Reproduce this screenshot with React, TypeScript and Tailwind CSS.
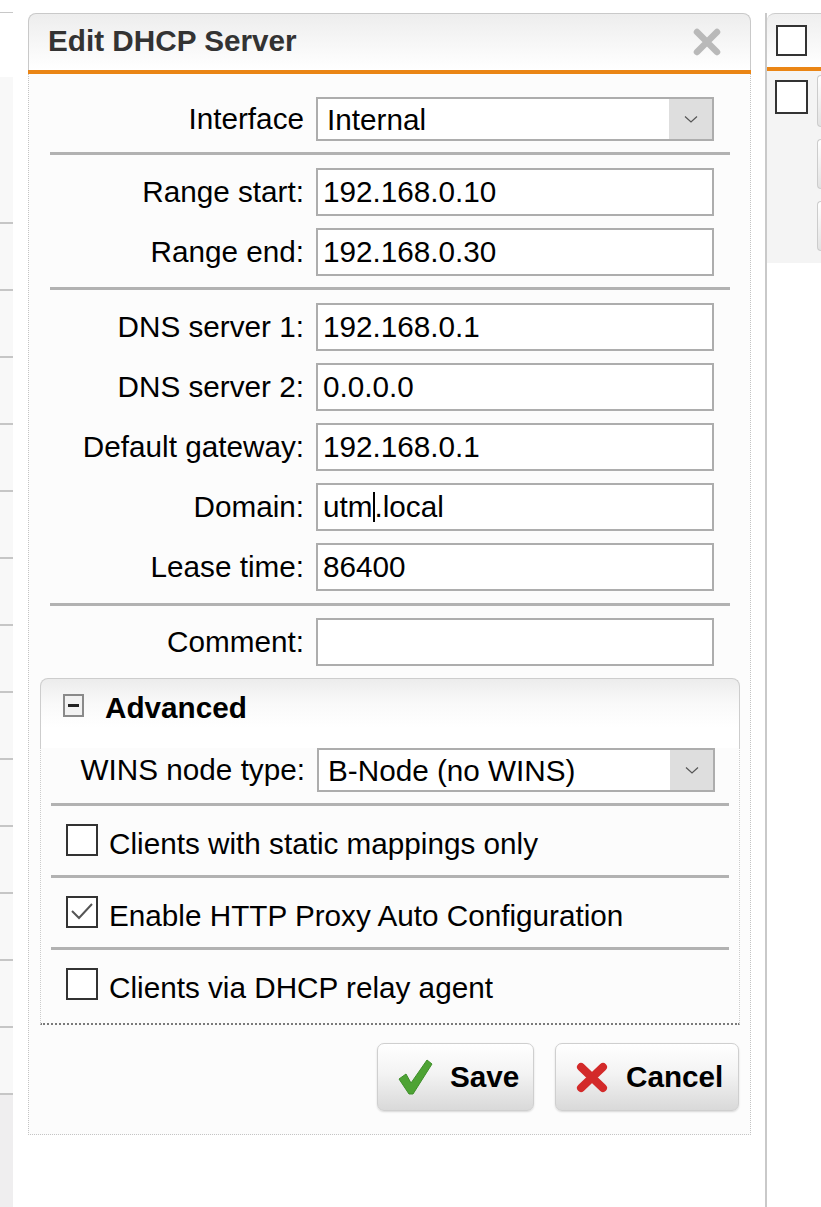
import React from "react";

const TextBox = ({ value, h = "h-[48px]", children }: { value?: string; h?: string; children?: React.ReactNode }) => (
    <div className={`${h} w-[398px] border-2 border-[#adadad] bg-white flex items-center pl-[5px] text-black`}>
        {children ?? value}
    </div>
);

const SelectBox = ({ value }: { value: string }) => (
    <div className="h-[44px] w-[398px] border-2 border-[#adadad] bg-white flex items-stretch text-black">
        <div className="flex-1 flex items-center pl-[9px] pt-[2px]">{value}</div>
        <div className="w-[43px] bg-[#dedede] flex items-center justify-center">
            <svg width="14" height="9" viewBox="0 0 14 9">
                <polyline points="1,1.5 7,7 13,1.5" fill="none" stroke="#555" strokeWidth="1.2" />
            </svg>
        </div>
    </div>
);

const Row = ({ label, children }: { label: string; children: React.ReactNode }) => (
    <div className="flex items-center">
        <div className="w-[254px] text-right text-black whitespace-nowrap">{label}</div>
        <div className="ml-[12px]">{children}</div>
    </div>
);

const Sep = ({ className = "" }: { className?: string }) => <div className={`h-[3px] bg-[#b2b2b2] ${className}`} />;

const CheckRow = ({ label, checked }: { label: string; checked?: boolean }) => (
    <div className="h-[69px] flex items-center pl-[15px]">
        <div className="w-[32px] h-[32px] border-2 border-[#333] bg-white flex items-center justify-center shrink-0 -mt-[1px]">
            {checked ? (
                <svg width="26" height="26" viewBox="0 0 26 26">
                    <polyline points="3,12 10,19 23,5" fill="none" stroke="#555" strokeWidth="2" />
                </svg>
            ) : null}
        </div>
        <span className="ml-[11px] mt-[7px] text-black whitespace-nowrap">{label}</span>
    </div>
);

const Button = ({ icon, label, w }: { icon: React.ReactNode; label: string; w: string }) => (
    <div className={`${w} h-[68px] rounded-[7px] border border-[#cfcfcf] bg-[linear-gradient(#ffffff,#f3f3f3_45%,#d9d9d9)] shadow-[0_1px_2px_rgba(0,0,0,0.15)] flex items-center pl-[19px]`}>
        {icon}
        <span className="ml-[17px] font-bold text-black">{label}</span>
    </div>
);

const GreenCheck = () => (
    <svg width="36" height="38" viewBox="0 0 36 38">
        <path d="M2 21 L9 16 L14 25 L30 2 L35 6 L16 36 L12 36 Z" fill="#4ea334" stroke="#3f8f2a" strokeWidth="1" strokeLinejoin="round" />
    </svg>
);

const RedX = () => (
    <svg width="34" height="33" viewBox="0 0 34 33">
        <path d="M6 6 L28 27 M28 6 L6 27" stroke="#d32a2a" strokeWidth="8" strokeLinecap="round" />
    </svg>
);

const App = () => {
    const lines = Array.from({ length: 13 });
    return (
        <div className="w-[821px] h-[1207px] bg-white flex items-start overflow-hidden font-['Liberation_Sans',Arial,sans-serif] text-[29.7px] leading-none">
            {/* left strip of the page behind */}
            <div className="w-[13px] h-full flex flex-col shrink-0">
                <div className="h-[13px] border-b border-[#c8c8c8]" />
                <div className="h-[64px]" />
                <div className="h-[145px] bg-[#f8f8f8]" />
                {lines.map((_, i) => (
                    <div key={i} className="h-[67px] bg-[#f8f8f8] border-t-2 border-[#c6c6c6]" />
                ))}
                <div className="flex-1 bg-[#efeeef] border-t-2 border-[#c6c6c6]" />
            </div>

            {/* dialog */}
            <div className="ml-[15px] mt-[13px] w-[723px] flex flex-col shrink-0">
                <div className="h-[57px] rounded-t-[8px] border-t border-l border-r border-[#c9c9c9] bg-[linear-gradient(#ededed,#fafafa_70%,#ffffff)] flex items-center justify-between pl-[19px] pr-[28px]">
                    <span className="font-bold text-[#333] -mt-[2px]">Edit DHCP Server</span>
                    <svg width="30" height="30" viewBox="0 0 30 30">
                        <path d="M5 5 L25 25 M25 5 L5 25" stroke="#b9b9b9" strokeWidth="6.5" strokeLinecap="round" />
                    </svg>
                </div>
                <div className="h-[4px] bg-[#ea8515]" />
                <div className="border-l border-r border-b border-dotted border-[#c4c4c4] bg-[#fcfcfc] pl-[11px] pr-[10px] pt-[23px] pb-[23px]">
                    <div className="px-[10px]">
                        <Row label="Interface">
                            <SelectBox value="Internal" />
                        </Row>
                        <Sep className="mt-[11px] mb-[13px]" />
                        <div className="flex flex-col gap-[12px]">
                            <Row label="Range start:"><TextBox value="192.168.0.10" /></Row>
                            <Row label="Range end:"><TextBox value="192.168.0.30" /></Row>
                        </div>
                        <Sep className="mt-[11px] mb-[13px]" />
                        <div className="flex flex-col gap-[12px]">
                            <Row label="DNS server 1:"><TextBox value="192.168.0.1" /></Row>
                            <Row label="DNS server 2:"><TextBox value="0.0.0.0" /></Row>
                            <Row label="Default gateway:"><TextBox value="192.168.0.1" /></Row>
                            <Row label="Domain:">
                                <TextBox>
                                    <span>utm</span>
                                    <span className="inline-block w-[2px] h-[30px] bg-black" />
                                    <span>.local</span>
                                </TextBox>
                            </Row>
                            <Row label="Lease time:"><TextBox value="86400" /></Row>
                        </div>
                        <Sep className="mt-[12px] mb-[12px]" />
                        <Row label="Comment:"><TextBox value="" /></Row>
                    </div>

                    {/* advanced panel */}
                    <div className="mt-[12px]">
                        <div className="h-[70px] rounded-t-[8px] border-t border-l border-r border-[#cdcdcd] bg-[linear-gradient(#ececec,#f9f9f9_35%,#ffffff_70%)] flex items-start pt-[15px] pl-[22px]">
                            <div className="w-[21px] h-[23px] border-2 border-[#8a8a8a] bg-[#f2f2f2] flex items-center justify-center">
                                <div className="w-[11px] h-[3px] bg-[#222]" />
                            </div>
                            <span className="ml-[21px] font-bold text-black -mt-[1px]">Advanced</span>
                        </div>
                        <div className="border-l border-r border-dotted border-[#cccccc] border-b-2 border-b-[#7a7a7a] bg-[#fcfcfc] px-[10px] pb-[4px]">
                            <Row label="WINS node type:">
                                <SelectBox value="B-Node (no WINS)" />
                            </Row>
                            <Sep className="mt-[11px]" />
                            <CheckRow label="Clients with static mappings only" />
                            <Sep />
                            <CheckRow label="Enable HTTP Proxy Auto Configuration" checked />
                            <Sep />
                            <CheckRow label="Clients via DHCP relay agent" />
                        </div>
                    </div>

                    <div className="mt-[18px] flex justify-end gap-[21px] pr-[1px]">
                        <Button w="w-[157px]" icon={<GreenCheck />} label="Save" />
                        <Button w="w-[184px]" icon={<RedX />} label="Cancel" />
                    </div>
                </div>
            </div>

            {/* right panel behind */}
            <div className="ml-[14px] mt-[13px] flex-1 h-[1194px] border-l-2 border-[#c9c9c9] flex flex-col">
                <div className="h-[54px] rounded-tl-[8px] border-t border-[#cccccc] bg-[linear-gradient(#efefef,#ffffff)] flex items-center pl-[9px]">
                    <div className="w-[31px] h-[31px] border-2 border-[#333] bg-white" />
                </div>
                <div className="h-[4px] bg-[#ea8515]" />
                <div className="h-[192px] bg-[#f4f4f4] flex">
                    <div className="pl-[8px] pt-[9px]">
                        <div className="w-[33px] h-[34px] border-2 border-[#333] bg-white" />
                    </div>
                    <div className="ml-[9px] flex-1 flex flex-col pt-[4px] gap-[12px]">
                        <div className="h-[52px] rounded-l-[6px] border border-r-0 border-[#cccccc] bg-[linear-gradient(#ffffff,#e2e2e2)]" />
                        <div className="h-[50px] rounded-l-[6px] border border-r-0 border-[#cccccc] bg-[linear-gradient(#ffffff,#e2e2e2)]" />
                        <div className="h-[50px] rounded-l-[6px] border border-r-0 border-[#cccccc] bg-[linear-gradient(#ffffff,#e2e2e2)]" />
                    </div>
                </div>
            </div>
        </div>
    );
};

export default App;
